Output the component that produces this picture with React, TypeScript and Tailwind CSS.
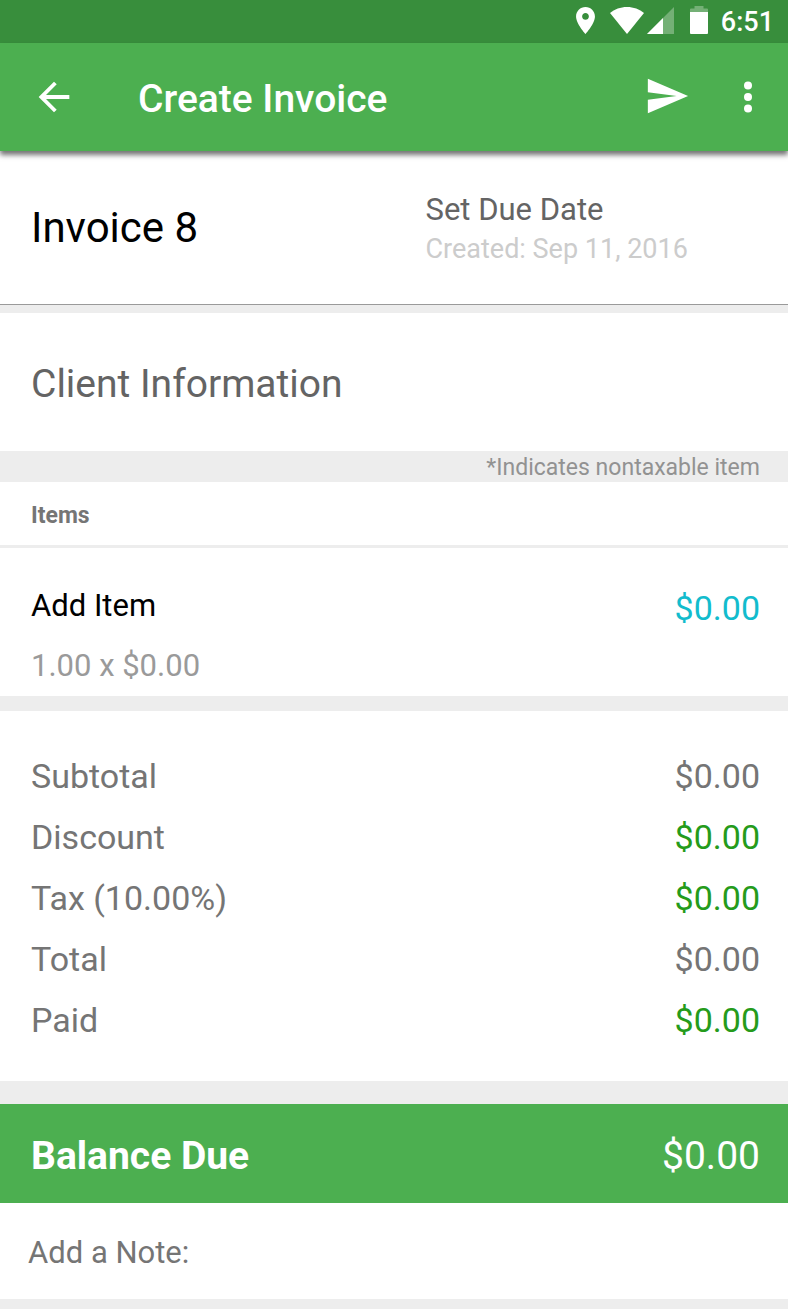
import { useState } from "react";

interface SummaryRow {
  label: string;
  amount: string;
  editable?: boolean;
}

const summary: SummaryRow[] = [
  { label: "Subtotal", amount: "$0.00" },
  { label: "Discount", amount: "$0.00", editable: true },
  { label: "Tax (10.00%)", amount: "$0.00", editable: true },
  { label: "Total", amount: "$0.00" },
  { label: "Paid", amount: "$0.00", editable: true },
];

function StatusBar() {
  return (
    <div className="flex h-[43px] items-center justify-end bg-[#388e3c] pr-[14px] text-white">
      <svg viewBox="5 2 14 20" className="mr-[15px] mb-[2px] h-[27px] w-[19px]" fill="currentColor">
        <path d="M12 2C8.13 2 5 5.13 5 9c0 5.25 7 13 7 13s7-7.75 7-13c0-3.87-3.13-7-7-7zm0 9.5c-1.38 0-2.5-1.12-2.5-2.5s1.12-2.5 2.5-2.5 2.5 1.12 2.5 2.5-1.12 2.5-2.5 2.5z" />
      </svg>
      <svg viewBox="0 0 34 27" className="mr-[3px] mb-[2px] h-[27px] w-[34px]" fill="currentColor">
        <path d="M17 27L0 6C4.500 2.200 10.500 0 17 0s12.500 2.200 17 6z" />
      </svg>
      <svg viewBox="0 0 27 27" className="mr-4 mb-[2px] h-[27px] w-[27px]" fill="currentColor">
        <path d="M0 27L27 0v27z" fillOpacity="0.3" />
        <path d="M0 27L16 11v16z" fillOpacity="1" />
      </svg>
      <svg viewBox="0 0 18 28" className="mr-[13px] mb-[3px] h-7 w-[18px]" fill="currentColor">
        <path d="M0 6V3.500Q0 2.500 1 2.500H4.500V0h9V2.500H17Q18 2.500 18 3.500V6z" fillOpacity="0.3" />
        <path d="M0 6h18v21q0 1-1 1H1q-1 0-1-1z" />
      </svg>
      <span className="pt-px text-[27px] leading-[42px] font-medium">6:51</span>
    </div>
  );
}

function AppBar() {
  return (
    <header className="relative flex h-[108px] items-center bg-[#4caf50] pr-5 pl-[31px] text-white shadow-[0_4px_5px_rgba(0,0,0,0.55)]">
      <button type="button" aria-label="Back">
        <svg viewBox="0 0 24 24" className="h-[46px] w-[46px]" fill="currentColor">
          <path d="M20 11H7.830l5.590-5.590L12 4l-8 8 8 8 1.410-1.410L7.830 13H20v-2z" />
        </svg>
      </button>
      <h1 className="ml-[61px] flex-1 pt-1 text-[39px] leading-[46px] font-medium">Create Invoice</h1>
      <button type="button" aria-label="Send" className="pb-[2px]">
        <svg viewBox="0 0 24 24" className="h-[46px] w-[46px]" fill="currentColor">
          <path d="M2.010 21L23 12 2.010 3 2 10l15 2-15 2z" />
        </svg>
      </button>
      <button type="button" aria-label="More options" className="ml-[38px]">
        <svg viewBox="0 0 40 46" className="h-[46px] w-10" fill="currentColor">
          <circle cx="20" cy="11.500" r="4" />
          <circle cx="20" cy="23" r="4" />
          <circle cx="20" cy="34.500" r="4" />
        </svg>
      </button>
    </header>
  );
}

export default function App() {
  const [note, setNote] = useState("");

  return (
    <div className="min-h-screen bg-[#ededed] font-[Roboto,sans-serif] text-[#757575]">
      <StatusBar />
      <AppBar />

      <main>
        <section className="grid grid-cols-2 items-center border-b border-[#9a9a9a] bg-white py-9 pl-[31px]">
          <h2 className="text-[42px] leading-[51px] text-black">Invoice 8</h2>
          <button type="button" className="pt-[3px] pl-4 text-left">
            <span className="block text-[31px] leading-10 text-[#646464]">Set Due Date</span>
            <span className="block text-[27px] leading-[38px] text-[#cccccc]">Created: Sep 11, 2016</span>
          </button>
        </section>

        <button
          type="button"
          className="mt-2 block w-full bg-white pt-12 pb-11 pl-[31px] text-left text-[39px] leading-[46px] text-[#646464]"
        >
          Client Information
        </button>

        <p className="pt-[3px] pr-7 text-right text-[23px] leading-7 text-[#929292]">*Indicates nontaxable item</p>

        <section>
          <h3 className="bg-white pt-1 pl-[31px] text-[23px] leading-[59px] font-bold">Items</h3>
          <button
            type="button"
            className="mt-[3px] flex w-full items-start justify-between bg-white pt-[38px] pr-7 pb-[11px] pl-[31px] text-left"
          >
            <span>
              <span className="block text-[31px] leading-[39px] text-black">Add Item</span>
              <span className="mt-[21px] block text-[31px] leading-[39px] text-[#9a9a9a]">1.00 x $0.00</span>
            </span>
            <span className="pt-[2px] text-[34px] leading-[41px] text-[#12bccd]">$0.00</span>
          </button>
        </section>

        <dl className="mt-[15px] flex flex-col gap-5 bg-white pt-[45px] pr-7 pb-10 pl-[31px] text-[34px] leading-[41px]">
          {summary.map((row) => (
            <div key={row.label} className="flex justify-between">
              <dt>{row.label}</dt>
              <dd className={row.editable ? "text-[#259b1b]" : ""}>{row.amount}</dd>
            </div>
          ))}
        </dl>

        <div className="mt-[23px] flex items-center justify-between bg-[#4caf50] pt-[29px] pr-7 pb-6 pl-[31px] text-[39px] leading-[46px] text-white">
          <span className="font-bold">Balance Due</span>
          <span>$0.00</span>
        </div>

        <div className="bg-white px-7">
          <input
            type="text"
            aria-label="Add a Note:"
            placeholder="Add a Note:"
            value={note}
            onChange={(e) => setNote(e.target.value)}
            className="block h-24 w-full pt-[2px] text-[31px] outline-none placeholder:text-[#757575]"
          />
        </div>
      </main>
    </div>
  );
}
